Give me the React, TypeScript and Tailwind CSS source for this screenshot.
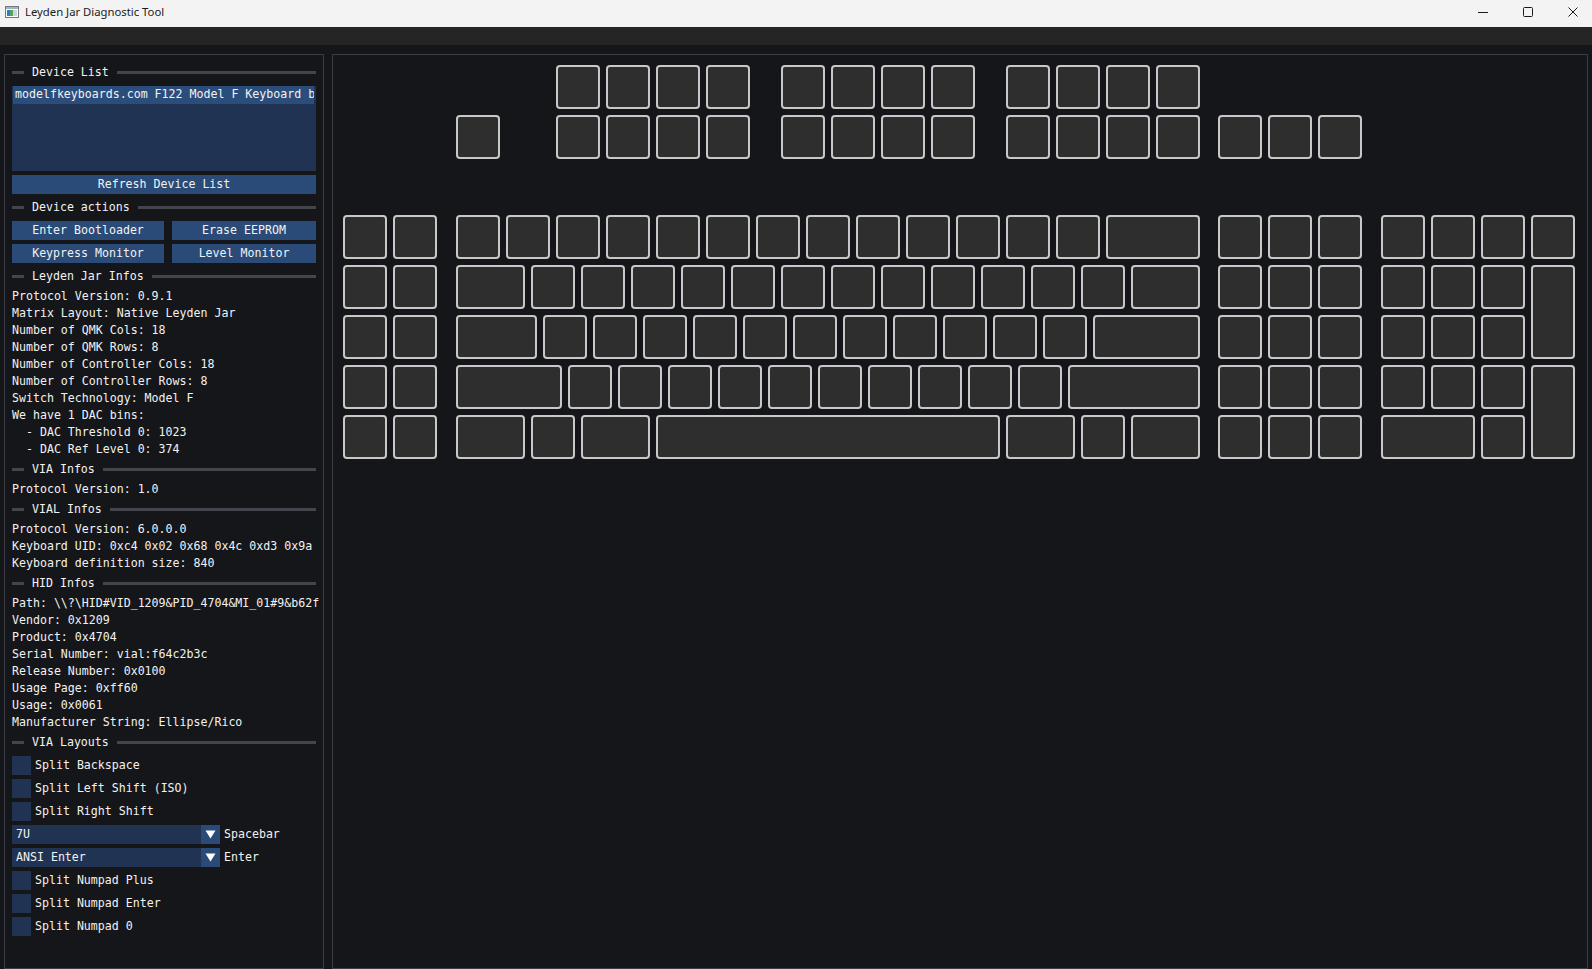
import React from 'react';

type Key = { x: number; y: number; w?: number; h?: number };

const U = 50;

// keyboard layout in units, F122 style
const buildKeys = (): Key[] => {
  const keys: Key[] = [];
  const run = (start: number, count: number, y: number) => {
    for (let i = 0; i < count; i++) keys.push({ x: start + i, y });
  };

  // function rows
  run(4.25, 4, 0);
  run(8.75, 4, 0);
  run(13.25, 4, 0);
  keys.push({ x: 2.25, y: 1 });
  run(4.25, 4, 1);
  run(8.75, 4, 1);
  run(13.25, 4, 1);
  run(17.5, 3, 1);

  // left block + nav cluster
  for (let y = 3; y <= 7; y++) {
    run(0, 2, y);
    run(17.5, 3, y);
  }

  // main block
  run(2.25, 13, 3);
  keys.push({ x: 15.25, y: 3, w: 2 });

  keys.push({ x: 2.25, y: 4, w: 1.5 });
  run(3.75, 12, 4);
  keys.push({ x: 15.75, y: 4, w: 1.5 });

  keys.push({ x: 2.25, y: 5, w: 1.75 });
  run(4, 11, 5);
  keys.push({ x: 15, y: 5, w: 2.25 });

  keys.push({ x: 2.25, y: 6, w: 2.25 });
  run(4.5, 10, 6);
  keys.push({ x: 14.5, y: 6, w: 2.75 });

  keys.push({ x: 2.25, y: 7, w: 1.5 });
  keys.push({ x: 3.75, y: 7 });
  keys.push({ x: 4.75, y: 7, w: 1.5 });
  keys.push({ x: 6.25, y: 7, w: 7 });
  keys.push({ x: 13.25, y: 7, w: 1.5 });
  keys.push({ x: 14.75, y: 7 });
  keys.push({ x: 15.75, y: 7, w: 1.5 });

  // numpad
  run(20.75, 4, 3);
  run(20.75, 3, 4);
  keys.push({ x: 23.75, y: 4, h: 2 });
  run(20.75, 3, 5);
  run(20.75, 3, 6);
  keys.push({ x: 23.75, y: 6, h: 2 });
  keys.push({ x: 20.75, y: 7, w: 2 });
  keys.push({ x: 22.75, y: 7 });

  return keys;
};

const KEYS = buildKeys();

const SeparatorText = ({ label }: { label: string }) => (
  <div className="flex h-[19px] items-center">
    <div className="h-[3px] w-[12px] bg-[#43444c]" />
    <span className="mx-[8px] whitespace-pre">{label}</span>
    <div className="h-[3px] flex-1 bg-[#43444c]" />
  </div>
);

const Line = ({ children }: { children: React.ReactNode }) => (
  <div className="h-[13px] whitespace-pre leading-[13px]">{children}</div>
);

const Button = ({ label, className = '' }: { label: string; className?: string }) => (
  <div className={`flex h-[19px] items-center justify-center bg-[#2a4b77] ${className}`}>{label}</div>
);

const Checkbox = ({ label }: { label: string }) => (
  <div className="flex h-[19px] items-center">
    <div className="h-[19px] w-[19px] bg-[#213352]" />
    <span className="ml-[4px] whitespace-pre">{label}</span>
  </div>
);

const Combo = ({ value, label }: { value: string; label: string }) => (
  <div className="flex h-[19px] items-center">
    <div className="flex h-[19px] w-[208px] items-center bg-[#213352]">
      <span className="flex-1 pl-[4px]">{value}</span>
      <div className="flex h-[19px] w-[19px] items-center justify-center bg-[#2a4b77]">
        <svg width="11" height="9" viewBox="0 0 11 9">
          <polygon points="0.5,0.5 10.5,0.5 5.5,8.5" fill="#ffffff" />
        </svg>
      </div>
    </div>
    <span className="ml-[4px]">{label}</span>
  </div>
);

const Sidebar = () => (
  <div className="h-full w-[320px] border border-[#3b3c44] pb-[3px] pl-[3px] pr-[4px] pt-[3px]">
    <div className="flex h-full flex-col gap-[4px] overflow-hidden pb-[4px] pl-[4px] pr-[3px] pt-[5px] text-[11.6px] text-[#f2f2f2] [font-family:'DejaVu_Sans_Mono',monospace]">
      <SeparatorText label="Device List" />
      <div className="h-[85px] w-[304px] shrink-0 bg-[#213352]">
        <div className="ml-[1px] mr-[2px] flex h-[18px] items-center overflow-hidden bg-[#2b4d7c] pl-[2px] whitespace-pre">
          modelfkeyboards.com F122 Model F Keyboard by Ellipse
        </div>
      </div>
      <Button label="Refresh Device List" className="w-[304px]" />
      <SeparatorText label="Device actions" />
      <div className="flex w-[304px] gap-[8px]">
        <Button label="Enter Bootloader" className="w-[152px]" />
        <Button label="Erase EEPROM" className="flex-1" />
      </div>
      <div className="flex w-[304px] gap-[8px]">
        <Button label="Keypress Monitor" className="w-[152px]" />
        <Button label="Level Monitor" className="flex-1" />
      </div>
      <SeparatorText label="Leyden Jar Infos" />
      <Line>Protocol Version: 0.9.1</Line>
      <Line>Matrix Layout: Native Leyden Jar</Line>
      <Line>Number of QMK Cols: 18</Line>
      <Line>Number of QMK Rows: 8</Line>
      <Line>Number of Controller Cols: 18</Line>
      <Line>Number of Controller Rows: 8</Line>
      <Line>Switch Technology: Model F</Line>
      <Line>We have 1 DAC bins:</Line>
      <Line>{'  - DAC Threshold 0: 1023'}</Line>
      <Line>{'  - DAC Ref Level 0: 374'}</Line>
      <SeparatorText label="VIA Infos" />
      <Line>Protocol Version: 1.0</Line>
      <SeparatorText label="VIAL Infos" />
      <Line>Protocol Version: 6.0.0.0</Line>
      <Line>Keyboard UID: 0xc4 0x02 0x68 0x4c 0xd3 0x9a 0x1f 0x2e</Line>
      <Line>Keyboard definition size: 840</Line>
      <SeparatorText label="HID Infos" />
      <Line>{'Path: \\\\?\\HID#VID_1209&PID_4704&MI_01#9&b62f3a1&0&0000#{4d1e55b2}'}</Line>
      <Line>Vendor: 0x1209</Line>
      <Line>Product: 0x4704</Line>
      <Line>Serial Number: vial:f64c2b3c</Line>
      <Line>Release Number: 0x0100</Line>
      <Line>Usage Page: 0xff60</Line>
      <Line>Usage: 0x0061</Line>
      <Line>Manufacturer String: Ellipse/Rico</Line>
      <SeparatorText label="VIA Layouts" />
      <Checkbox label="Split Backspace" />
      <Checkbox label="Split Left Shift (ISO)" />
      <Checkbox label="Split Right Shift" />
      <Combo value="7U" label="Spacebar" />
      <Combo value="ANSI Enter" label="Enter" />
      <Checkbox label="Split Numpad Plus" />
      <Checkbox label="Split Numpad Enter" />
      <Checkbox label="Split Numpad 0" />
    </div>
  </div>
);

const KeyboardView = () => (
  <div className="relative h-full flex-1 border border-[#3b3c44]">
    {KEYS.map((k, i) => (
      <div
        key={i}
        className="absolute box-border rounded-[4px] border-2 border-[#c8c8c8] bg-[#2e2e2e]"
        style={{
          left: 10 + k.x * U,
          top: 10 + k.y * U,
          width: (k.w ?? 1) * U - 6,
          height: (k.h ?? 1) * U - 6,
        }}
      />
    ))}
  </div>
);

const TitleBar = () => (
  <div className="flex h-[27px] shrink-0 items-center bg-[#f3f3f3] pb-[3px]">
    <div className="ml-[5px] mr-[6px]">
      <svg width="14" height="12" viewBox="0 0 14 12">
        <rect x="0.5" y="0.5" width="13" height="11" fill="#ffffff" stroke="#7a7a7a" />
        <rect x="1" y="1" width="12" height="2" fill="#9bb4cc" />
        <rect x="2" y="4" width="3" height="6" fill="#2f7fbf" />
        <rect x="5" y="4" width="3" height="6" fill="#5aa35a" />
        <rect x="8" y="4" width="4" height="6" fill="#c9d7e3" />
      </svg>
    </div>
    <span className="text-[11.3px] text-[#1b1b1b] [font-family:'Noto_Sans',sans-serif]">Leyden Jar Diagnostic Tool</span>
    <div className="ml-auto flex items-center gap-[35px] pr-[14px]">
      <svg width="10" height="10" viewBox="0 0 10 10">
        <line x1="0" y1="5.5" x2="10" y2="5.5" stroke="#1b1b1b" strokeWidth="1" />
      </svg>
      <svg width="10" height="10" viewBox="0 0 10 10">
        <rect x="0.5" y="0.5" width="9" height="9" rx="1" fill="none" stroke="#1b1b1b" strokeWidth="1" />
      </svg>
      <svg width="10" height="10" viewBox="0 0 10 10">
        <path d="M0.5 0.5 L9.5 9.5 M9.5 0.5 L0.5 9.5" stroke="#1b1b1b" strokeWidth="1" />
      </svg>
    </div>
  </div>
);

export default function App() {
  return (
    <div className="flex h-[969px] w-[1592px] flex-col overflow-hidden bg-[#151619]">
      <TitleBar />
      <div className="h-[18px] shrink-0 bg-[#252525]" />
      <div className="flex min-h-0 flex-1 gap-[8px] pl-[4px] pr-[4px] pt-[9px]">
        <Sidebar />
        <KeyboardView />
      </div>
    </div>
  );
}
